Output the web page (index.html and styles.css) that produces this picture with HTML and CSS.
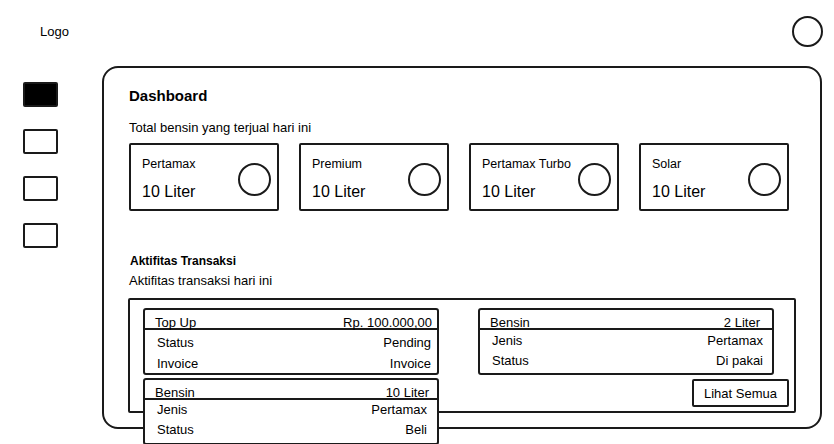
FILE: index.html
```html
<!DOCTYPE html>
<html lang="id">
<head>
<meta charset="utf-8">
<title>Dashboard</title>
<link rel="stylesheet" href="styles.css">
</head>
<body>
  <header class="topbar">
    <div class="logo">Logo</div>
    <div class="avatar"></div>
  </header>
  <div class="layout">
    <nav class="sidebar">
      <div class="nav-item active"></div>
      <div class="nav-item"></div>
      <div class="nav-item"></div>
      <div class="nav-item"></div>
    </nav>
    <main class="panel">
      <h1 class="panel-title">Dashboard</h1>
      <p class="subtitle">Total bensin yang terjual hari ini</p>
      <div class="stats">
        <div class="stat-card">
          <div class="stat-info">
            <div class="stat-name">Pertamax</div>
            <div class="stat-value">10 Liter</div>
          </div>
          <div class="stat-icon"></div>
        </div>
        <div class="stat-card">
          <div class="stat-info">
            <div class="stat-name">Premium</div>
            <div class="stat-value">10 Liter</div>
          </div>
          <div class="stat-icon"></div>
        </div>
        <div class="stat-card">
          <div class="stat-info">
            <div class="stat-name">Pertamax Turbo</div>
            <div class="stat-value">10 Liter</div>
          </div>
          <div class="stat-icon"></div>
        </div>
        <div class="stat-card">
          <div class="stat-info">
            <div class="stat-name">Solar</div>
            <div class="stat-value">10 Liter</div>
          </div>
          <div class="stat-icon"></div>
        </div>
      </div>

      <h2 class="section-title">Aktifitas Transaksi</h2>
      <p class="section-sub">Aktifitas transaksi hari ini</p>

      <div class="tx-box">
        <div class="tx-col">
          <div class="tx-card">
            <div class="tx-head"><span>Top Up</span><span>Rp. 100.000,00</span></div>
            <div class="tx-body">
              <div class="tx-row"><span>Status</span><span>Pending</span></div>
              <div class="tx-row"><span>Invoice</span><span>Invoice</span></div>
            </div>
          </div>
          <div class="tx-card tx-card--mid">
            <div class="tx-head"><span>Bensin</span><span>10 Liter</span></div>
            <div class="tx-body">
              <div class="tx-row"><span>Jenis</span><span>Pertamax</span></div>
              <div class="tx-row"><span>Status</span><span>Beli</span></div>
            </div>
          </div>
        </div>
        <div class="tx-col tx-col--right">
          <div class="tx-card tx-card--wide">
            <div class="tx-head"><span>Bensin</span><span>2 Liter</span></div>
            <div class="tx-body">
              <div class="tx-row"><span>Jenis</span><span>Pertamax</span></div>
              <div class="tx-row"><span>Status</span><span>Di pakai</span></div>
            </div>
          </div>
          <button class="btn">Lihat Semua</button>
        </div>
      </div>
    </main>
  </div>
</body>
</html>
```
FILE: styles.css
```css
html, body {
  margin: 0;
  height: 444px;
  overflow: hidden;
  background: #fff;
}

body {
  font-family: "Liberation Sans", Arial, sans-serif;
  color: #000;
  font-size: 13px;
}

.topbar {
  display: flex;
  justify-content: space-between;
  align-items: center;
  height: 63px;
  padding: 0 11px 0 40px;
  box-sizing: border-box;
}

.logo {
  font-size: 13px;
  line-height: 15px;
}

.avatar {
  width: 31px;
  height: 31px;
  border: 2px solid #1a1a1a;
  border-radius: 50%;
  box-sizing: border-box;
}

.layout {
  display: flex;
}

.sidebar {
  width: 102px;
  padding: 19px 0 0 23px;
  box-sizing: border-box;
  display: flex;
  flex-direction: column;
  gap: 22px;
}

.nav-item {
  width: 35px;
  height: 25px;
  border: 2px solid #1a1a1a;
  border-radius: 2px;
  box-sizing: border-box;
}

.nav-item.active {
  background: #000;
}

.panel {
  margin-top: 3px;
  width: 720px;
  height: 363px;
  border: 2px solid #1a1a1a;
  border-radius: 16px;
  box-sizing: border-box;
  padding: 19px 0 0 25px;
}

.panel-title {
  margin: 0;
  font-size: 15px;
  font-weight: 700;
  line-height: 18px;
}

.subtitle {
  margin: 15px 0 0;
  font-size: 13px;
  line-height: 15px;
}

.stats {
  display: flex;
  gap: 20px;
  margin-top: 8px;
}

.stat-card {
  width: 150px;
  height: 68px;
  border: 2px solid #1a1a1a;
  border-radius: 2px;
  box-sizing: border-box;
  display: flex;
  justify-content: space-between;
  align-items: center;
  padding: 0 6px 0 11px;
}

.stat-info {
  align-self: flex-start;
  padding-top: 12px;
}

.stat-name {
  font-size: 12.5px;
  line-height: 14px;
  white-space: nowrap;
}

.stat-value {
  margin-top: 12px;
  font-size: 16px;
  line-height: 18px;
}

.stat-icon {
  flex: none;
  width: 33px;
  height: 33px;
  margin-top: 4px;
  border: 2px solid #1a1a1a;
  border-radius: 50%;
  box-sizing: border-box;
}

.section-title {
  margin: 43px 0 0 1px;
  font-size: 12px;
  font-weight: 700;
  line-height: 14px;
}

.section-sub {
  margin: 5px 0 0;
  font-size: 13px;
  line-height: 15px;
}

.tx-box {
  margin: 10px 0 0 -1px;
  width: 668px;
  height: 115px;
  border: 2px solid #1a1a1a;
  border-radius: 2px;
  box-sizing: border-box;
  padding: 8px 5px 0 13px;
  display: grid;
  grid-template-columns: 296px 311px;
  column-gap: 39px;
  align-items: start;
}

.tx-col {
  display: flex;
  flex-direction: column;
  gap: 3px;
}

.tx-col--right {
  gap: 4px;
}

.tx-card {
  width: 296px;
  border: 2px solid #1a1a1a;
  border-radius: 3px;
  background: #fff;
  box-sizing: border-box;
}

.tx-head {
  height: 20px;
  border-bottom: 2px solid #1a1a1a;
  box-sizing: border-box;
  padding: 5px 5px 0 10px;
  display: flex;
  justify-content: space-between;
  line-height: 15px;
}

.tx-body {
  height: 43px;
  box-sizing: border-box;
  padding: 2px 6px 0 12px;
}

.tx-row {
  display: flex;
  justify-content: space-between;
  line-height: 21px;
}

.tx-card--mid .tx-head {
  padding-right: 8px;
}

.tx-card--mid .tx-body {
  padding-top: 0;
  padding-right: 10px;
}

.tx-card--mid .tx-row {
  line-height: 20px;
}

.tx-card--wide .tx-head {
  padding-right: 12px;
}

.tx-card--wide .tx-body {
  padding-top: 1px;
  padding-right: 9px;
}

.tx-card--wide .tx-row {
  line-height: 20px;
}

.btn {
  align-self: flex-end;
  width: 97px;
  height: 28px;
  border: 2px solid #1a1a1a;
  border-radius: 2px;
  background: #fff;
  box-sizing: border-box;
  font-family: inherit;
  font-size: 13px;
  color: #000;
  padding: 0;
  display: flex;
  align-items: center;
  justify-content: center;
}
```
